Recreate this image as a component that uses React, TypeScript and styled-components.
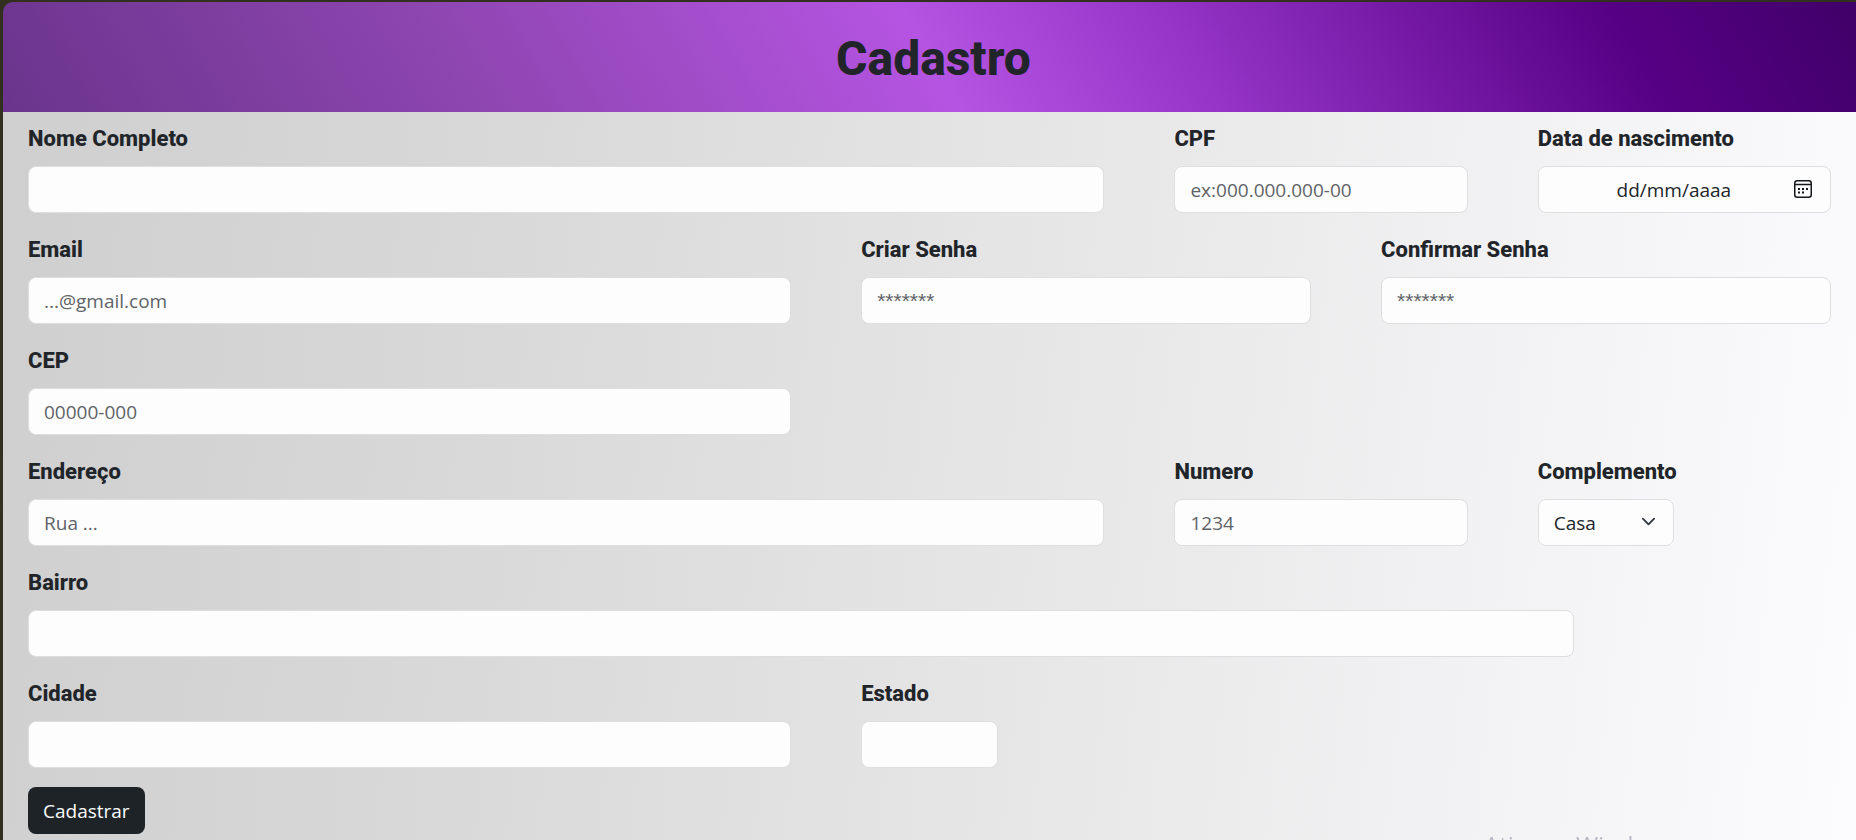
import React from "react";
import styled, { createGlobalStyle } from "styled-components";

const GlobalStyle = createGlobalStyle`
  *, *::before, *::after { box-sizing: border-box; }
  body {
    margin: 0;
    background: #31301e;
    color: #212529;
    font-family: "Open Sans", "Noto Sans", sans-serif;
    font-size: 19px;
    line-height: 30px;
  }
`;

const Page = styled.div`
  min-height: 100vh;
  padding: 2px 0 0 3px;
  display: flex;
  flex-direction: column;
  overflow: hidden;
`;

const Header = styled.header`
  padding: 28px 0 24px 8px;
  display: flex;
  align-items: center;
  justify-content: center;
  border-top-left-radius: 10px;
  background: linear-gradient(60deg, #6a348c 0%, #8c45ae 24%, #b554e2 50%, #9a38cc 62%, #560085 87%, #400068 100%);
`;

const Title = styled.h1`
  margin: 0;
  font-family: Roboto, sans-serif;
  font-size: 48px;
  font-weight: 800;
  line-height: 58px;
`;

const Form = styled.form`
  flex: 1;
  padding: 7px 25px 6px;
  background: linear-gradient(96deg, #cfcfd0 0%, #d8d8d8 25%, #e6e6e7 55%, #fcfcfe 100%);
`;

const Row = styled.div`
  display: flex;
  gap: 70px;
  margin-bottom: 17px;
`;

const Field = styled.div<{ $span: number }>`
  flex: none;
  width: calc((100% - 80px) / 11 * ${(p) => p.$span} - 20px);
`;

const Label = styled.label`
  display: block;
  margin-bottom: 10px;
  padding-top: 3px;
  font-family: Roboto, sans-serif;
  font-size: 22px;
  font-weight: 800;
  line-height: 34px;
  white-space: nowrap;
`;

const Control = styled.input`
  display: block;
  width: 100%;
  height: 47px;
  padding: 0 15px;
  border: 1px solid #dedee0;
  border-radius: 8px;
  background: #fdfdfd;
  color: #212529;
  font: inherit;
  &::placeholder { color: #5f6368; opacity: 1; }
  &[type="password"] {
    font-family: "Liberation Sans", sans-serif;
    font-size: 21px;
  }
`;

const DateBox = styled.div`
  display: flex;
  align-items: center;
  height: 47px;
  padding: 0 18px 0 15px;
  border: 1px solid #dedee0;
  border-radius: 8px;
  background: #fdfdfd;
`;

const DateInput = styled.input`
  flex: 1;
  min-width: 0;
  padding: 0;
  border: 0;
  background: transparent;
  color: #212529;
  font: inherit;
  text-align: center;
  &::placeholder { color: #212529; opacity: 1; }
`;

const IconButton = styled.button`
  display: flex;
  padding: 0 0 2px;
  border: 0;
  background: transparent;
  color: #16191c;
`;

const Select = styled.select`
  display: block;
  width: 100%;
  height: 47px;
  padding: 0 15px;
  border: 1px solid #dedee0;
  border-radius: 8px;
  background: transparent;
  color: #212529;
  font: inherit;
  appearance: none;
`;

const SelectBox = styled.div`
  position: relative;
  border-radius: 8px;
  background: #fdfdfd;
  svg { position: absolute; right: 18px; top: 15px; pointer-events: none; }
`;

const Submit = styled.button`
  display: block;
  height: 47px;
  margin-top: 19px;
  padding: 0 15px;
  border: 0;
  border-radius: 8px;
  background: #1e2328;
  color: #fdfdfd;
  font: inherit;
`;

const Watermark = styled.p`
  position: fixed;
  right: 178px;
  bottom: -20px;
  margin: 0;
  color: #b9b9c4;
  font-size: 24px;
  line-height: 30px;
`;

type TextFieldProps = { id: string; label: string; span: number; placeholder?: string; type?: string };

function TextField({ id, label, span, placeholder, type = "text" }: TextFieldProps) {
  return (
    <Field $span={span}>
      <Label htmlFor={id}>{label}</Label>
      <Control id={id} type={type} placeholder={placeholder} />
    </Field>
  );
}

function CalendarIcon() {
  return (
    <svg width="18" height="18" viewBox="0 0 18 18" fill="none" stroke="currentColor" aria-hidden="true">
      <rect x="0.75" y="0.75" width="16.5" height="16.5" rx="2.5" strokeWidth="1.5" />
      <path d="M1 4.5h16" strokeWidth="1.5" />
      <path d="M8 9h2M12 9h2M4 9h2M4 12.5h2M8 12.5h2" strokeWidth="2" />
    </svg>
  );
}

export default function App() {
  return (
    <>
      <GlobalStyle />
      <Page>
        <Header>
          <Title>Cadastro</Title>
        </Header>
        <Form onSubmit={(e) => e.preventDefault()}>
          <Row>
            <TextField id="nome" label="Nome Completo" span={7} />
            <TextField id="cpf" label="CPF" span={2} placeholder="ex:000.000.000-00" />
            <Field $span={2}>
              <Label htmlFor="nascimento">Data de nascimento</Label>
              <DateBox>
                <DateInput id="nascimento" type="text" placeholder="dd/mm/aaaa" />
                <IconButton type="button" aria-label="Abrir calendário">
                  <CalendarIcon />
                </IconButton>
              </DateBox>
            </Field>
          </Row>
          <Row>
            <TextField id="email" label="Email" span={5} type="email" placeholder="...@gmail.com" />
            <TextField id="senha" label="Criar Senha" span={3} type="password" placeholder="*******" />
            <TextField id="confirmar" label="Confirmar Senha" span={3} type="password" placeholder="*******" />
          </Row>
          <Row>
            <TextField id="cep" label="CEP" span={5} placeholder="00000-000" />
          </Row>
          <Row>
            <TextField id="endereco" label="Endereço" span={7} placeholder="Rua ..." />
            <TextField id="numero" label="Numero" span={2} placeholder="1234" />
            <Field $span={1}>
              <Label htmlFor="complemento">Complemento</Label>
              <SelectBox>
                <Select id="complemento" defaultValue="Casa">
                  <option>Casa</option>
                  <option>Apto</option>
                </Select>
                <svg width="15" height="15" viewBox="0 0 16 16" fill="none" stroke="#343a40" strokeWidth="2" strokeLinecap="round" strokeLinejoin="round" aria-hidden="true">
                  <path d="m2 5 6 6 6-6" />
                </svg>
              </SelectBox>
            </Field>
          </Row>
          <Row>
            <TextField id="bairro" label="Bairro" span={10} />
          </Row>
          <Row>
            <TextField id="cidade" label="Cidade" span={5} />
            <TextField id="estado" label="Estado" span={1} />
          </Row>
          <Submit type="submit">Cadastrar</Submit>
        </Form>
        <Watermark>Ativar o Windows</Watermark>
      </Page>
    </>
  );
}
